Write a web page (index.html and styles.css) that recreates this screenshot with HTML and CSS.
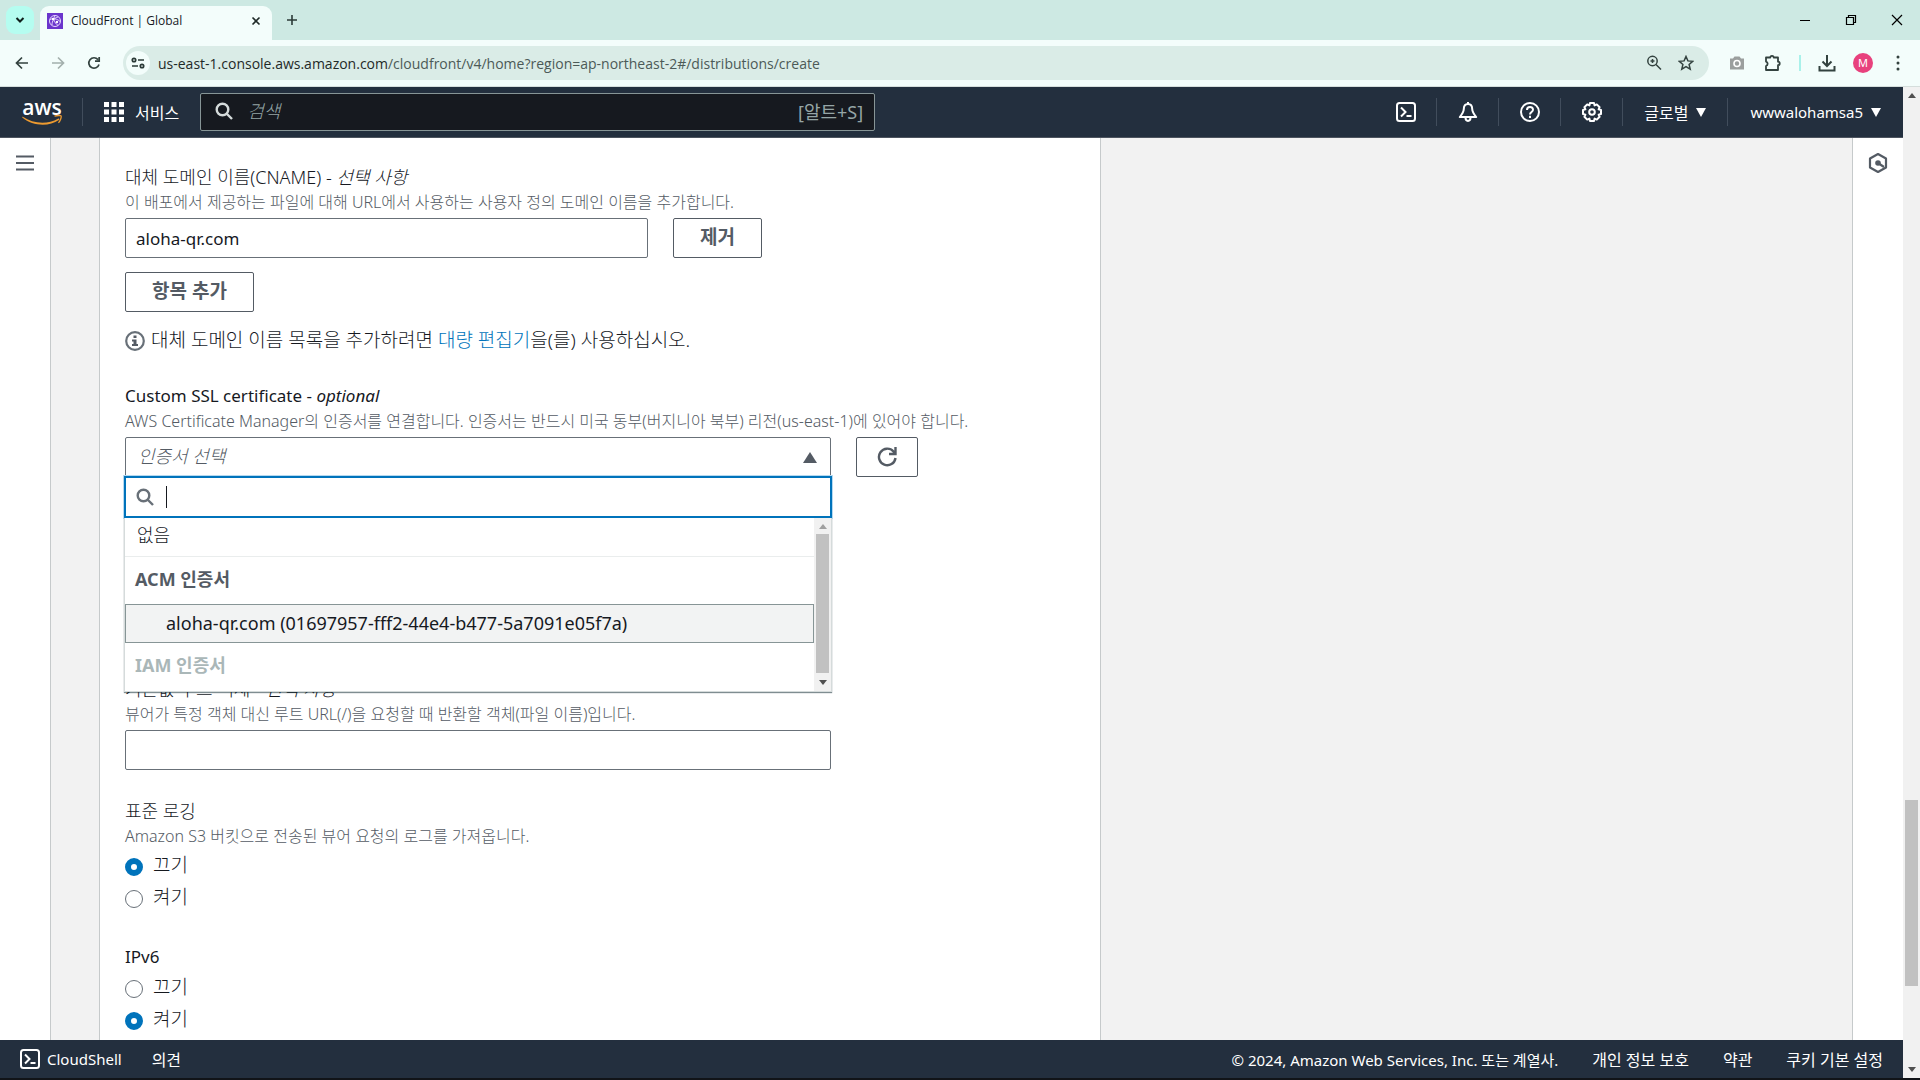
FILE: index.html
```html
<!DOCTYPE html>
<html lang="ko">
<head>
  <meta charset="utf-8">
  <title>CloudFront | Global</title>
  <link rel="stylesheet" href="styles.css">
</head>
<body>
  <!-- Browser window -->
  <div class="tab-strip">
    <button class="tab-search" aria-label="Search tabs">
      <svg width="12" height="12" viewBox="0 0 12 12"><path d="M2.500 4l3.500 3.500L9.500 4" fill="none" stroke="#10201c" stroke-width="2"/></svg>
    </button>
    <div class="tab">
      <svg class="favicon" width="16" height="16" viewBox="0 0 16 16">
        <rect width="16" height="16" fill="#6a35cc"/>
        <g fill="none" stroke="#e6d9ff" stroke-width="1">
          <circle cx="8" cy="8" r="5.500"/>
          <path d="M3 6.500c3-1.500 7-1 10 2M5 12c0-4 2-7 6-8M8 2.500c-2 3-1 7 3 10"/>
        </g>
        <circle cx="6" cy="6" r="1.200" fill="#fff"/><circle cx="10" cy="9" r="1.200" fill="#fff"/>
      </svg>
      <span class="tab-title">CloudFront | Global</span>
      <button class="icon-button" aria-label="Close tab">
        <svg width="10" height="10" viewBox="0 0 10 10"><path d="M1.500 1.500l7 7M8.500 1.500l-7 7" stroke="#1f2a28" stroke-width="1.600"/></svg>
      </button>
    </div>
    <button class="icon-button" aria-label="New tab">
      <svg width="12" height="12" viewBox="0 0 12 12"><path d="M6 1v10M1 6h10" stroke="#2b3a37" stroke-width="1.600"/></svg>
    </button>
    <div class="window-controls">
      <button class="icon-button" aria-label="Minimize"><svg width="12" height="12" viewBox="0 0 12 12"><path d="M1 6.500h10" stroke="#000"/></svg></button>
      <button class="icon-button" aria-label="Restore"><svg width="12" height="12" viewBox="0 0 12 12"><path d="M1.500 3.500h7v7h-7zM3.500 3.500v-2h7v7h-2" fill="none" stroke="#000" stroke-width="1.200"/></svg></button>
      <button class="icon-button" aria-label="Close"><svg width="12" height="12" viewBox="0 0 12 12"><path d="M1 1l10 10M11 1L1 11" stroke="#000" stroke-width="1.200"/></svg></button>
    </div>
  </div>

  <div class="toolbar">
    <button class="icon-button" aria-label="Back"><svg width="14" height="14" viewBox="0 0 14 14"><path d="M13 7H2M7 1.500L1.500 7 7 12.500" fill="none" stroke="#33423f" stroke-width="1.700"/></svg></button>
    <button class="icon-button" aria-label="Forward"><svg width="14" height="14" viewBox="0 0 14 14"><path d="M1 7h11M7 1.500L12.500 7 7 12.500" fill="none" stroke="#a3b0ad" stroke-width="1.700"/></svg></button>
    <button class="icon-button" aria-label="Reload"><svg width="14" height="14" viewBox="0 0 14 14"><path d="M12 8.500A5.200 5.200 0 1 1 11 3.600M12.200 1v4.200H8" fill="none" stroke="#33423f" stroke-width="1.700"/></svg></button>
    <div class="address-bar">
      <span class="site-info">
        <svg width="14" height="12" viewBox="0 0 14 12" fill="none" stroke="#2b3a37" stroke-width="1.700"><circle cx="3" cy="3" r="1.700"/><path d="M7 3h6M1 9h6"/><circle cx="11" cy="9" r="1.700"/></svg>
      </span>
      <span class="url">us-east-1.console.aws.amazon.com<span class="url-path">/cloudfront/v4/home?region=ap-northeast-2#/distributions/create</span></span>
      <svg width="16" height="16" viewBox="0 0 16 16" fill="none" stroke="#33423f" stroke-width="1.500"><circle cx="6.500" cy="6" r="4.700"/><path d="M10 9.500l5 5M4.500 6h4M6.500 4v4"/></svg>
      <svg width="16" height="16" viewBox="0 0 16 16" fill="none" stroke="#33423f" stroke-width="1.500"><path d="M8 1.500l1.900 4.400 4.800.4-3.600 3.200 1.100 4.700L8 11.700l-4.200 2.500 1.100-4.700L1.300 6.300l4.800-.4z"/></svg>
    </div>
    <div class="toolbar-icons">
      <svg width="20" height="16" viewBox="0 0 20 16"><path d="M3 3.500h3L7.500 1.500h5L14 3.500h3v11H3z" fill="#9b9f9e"/><circle cx="10" cy="8.500" r="3" fill="none" stroke="#fff" stroke-width="1.600"/></svg>
      <svg width="18" height="18" viewBox="0 0 18 18"><path d="M2 3.500h4.300a1.700 1.700 0 0 1 3.400 0H14v4.200a1.700 1.700 0 0 1 0 3.400V16H2v-4a2.300 2.300 0 0 0 0-4.400z" fill="none" stroke="#33423f" stroke-width="1.800" stroke-linejoin="round"/></svg>
      <span class="toolbar-divider"></span>
      <svg width="18" height="18" viewBox="0 0 18 18"><path d="M9 1v11M4.500 7.500L9 12l4.500-4.500M1.500 12v4.500h15V12" fill="none" stroke="#33423f" stroke-width="2"/></svg>
      <span class="avatar">M</span>
      <svg width="4" height="16" viewBox="0 0 4 16" fill="#33423f"><circle cx="2" cy="2" r="1.500"/><circle cx="2" cy="8" r="1.500"/><circle cx="2" cy="14" r="1.500"/></svg>
    </div>
  </div>

  <div class="viewport">
    <div class="console">
      <header class="aws-header">
        <a class="logo" href="#" aria-label="AWS">
          <span class="logo-text">aws</span>
          <svg width="40" height="11" viewBox="0 0 40 11"><path d="M.8 1.800C11 9 26 9.500 36 3.800c1-.6 1.900.4.900 1.200C27 12 11 11.500.3 2.600c-.5-.5 0-1.100.5-.8z" fill="#ec9a30"/><path d="M32.500 1.200c2.600-1 6.300-.9 6.600-.1.400 1-.8 5-2.700 6.600" fill="none" stroke="#ec9a30" stroke-width="1.300"/></svg>
        </a>
        <span class="header-divider"></span>
        <button class="services">
          <svg width="20" height="20" viewBox="0 0 20 20" fill="#fff"><path d="M0 0h5v5H0zM7.500 0h5v5h-5zM15 0h5v5h-5zM0 7.500h5v5H0zM7.500 7.500h5v5h-5zM15 7.500h5v5h-5zM0 15h5v5H0zM7.500 15h5v5h-5zM15 15h5v5h-5z"/></svg>
          서비스
        </button>
        <div class="header-search">
          <svg width="18" height="18" viewBox="0 0 18 18" fill="none" stroke="#d5dbdb" stroke-width="2.400"><circle cx="7.500" cy="7.500" r="5.800"/><path d="M11.500 11.500l5.500 5.500"/></svg>
          <input type="text" placeholder="검색" aria-label="검색">
          <span class="shortcut">[알트+S]</span>
        </div>
        <nav class="header-tools">
          <button class="header-tool" aria-label="CloudShell"><svg width="20" height="20" viewBox="0 0 20 20" fill="none" stroke="#fff" stroke-width="2"><rect x="1" y="1" width="18" height="18" rx="2.500"/><path d="M5 5.500l4.500 4.500L5 14.500M10.500 14h5"/></svg></button>
          <button class="header-tool" aria-label="알림"><svg width="20" height="20" viewBox="0 0 20 20" fill="none" stroke="#fff" stroke-width="2"><path d="M10 2C7 2 5.800 4.300 5.800 7c0 3-1.200 4.500-4 8h16.400c-2.800-3.500-4-5-4-8 0-2.700-1.200-5-4.200-5zM7.500 15.500c0 4.500 5 4.500 5 0M10 0v2" stroke-linejoin="round"/></svg></button>
          <button class="header-tool" aria-label="도움말"><svg width="20" height="20" viewBox="0 0 20 20" fill="none" stroke="#fff" stroke-width="2"><circle cx="10" cy="10" r="9"/><path d="M7 8c0-4 6-4 6-.3 0 2.300-3 2.300-3 4.800M10 13.800v2.200"/></svg></button>
          <button class="header-tool" aria-label="설정"><svg width="20" height="20" viewBox="0 0 20 20" fill="none" stroke="#fff" stroke-width="2"><path d="M8 1h4l.6 2.400 2.200-1 2.800 2.800-1 2.200L19 8v4l-2.400.6 1 2.200-2.800 2.800-2.200-1L12 19H8l-.6-2.400-2.200 1-2.800-2.800 1-2.200L1 12V8l2.400-.6-1-2.200 2.800-2.800 2.200 1z" stroke-linejoin="round"/><circle cx="10" cy="10" r="2.800"/></svg></button>
          <button class="header-menu region">글로벌 <svg width="10" height="9" viewBox="0 0 10 9"><path d="M0 0h10L5 9z" fill="#fff"/></svg></button>
          <button class="header-menu account">wwwalohamsa5 <svg width="10" height="9" viewBox="0 0 10 9"><path d="M0 0h10L5 9z" fill="#fff"/></svg></button>
        </nav>
      </header>

      <div class="content">
        <aside class="side-nav">
          <button class="icon-button" aria-label="메뉴 열기"><svg width="18" height="16" viewBox="0 0 18 16"><path d="M0 1.500h18M0 8h18M0 14.500h18" stroke="#545b64" stroke-width="2"/></svg></button>
        </aside>

        <main class="page">
          <form class="panel">
            <div class="field">
              <label class="field-label" for="cname">대체 도메인 이름(CNAME) - <i>선택 사항</i></label>
              <p class="hint">이 배포에서 제공하는 파일에 대해 URL에서 사용하는 사용자 정의 도메인 이름을 추가합니다.</p>
              <div class="control-row">
                <input class="text-input cname-input" id="cname" type="text" value="aloha-qr.com">
                <button class="button" type="button">제거</button>
              </div>
              <button class="button add-button" type="button">항목 추가</button>
              <p class="info">
                <svg width="20" height="20" viewBox="0 0 20 20"><circle cx="10" cy="10" r="8.800" fill="none" stroke="#687078" stroke-width="2.200"/><path d="M8.500 4.500h3v2.500h-3zM7 8.500h4.500V13H13v2H7v-2h1.500v-2.500H7z" fill="#545b64"/></svg>
                <span>대체 도메인 이름 목록을 추가하려면 <a href="#">대량 편집기</a>을(를) 사용하십시오.</span>
              </p>
            </div>

            <div class="field certificate-field">
              <label class="field-label" for="certificate" lang="en">Custom SSL certificate - <i>optional</i></label>
              <p class="hint">AWS Certificate Manager의 인증서를 연결합니다. 인증서는 반드시 미국 동부(버지니아 북부) 리전(us-east-1)에 있어야 합니다.</p>
              <div class="control-row">
                <div class="select-box">
                  <select class="select" id="certificate"><option>인증서 선택</option></select>
                  <div class="dropdown">
                    <div class="dropdown-search">
                      <svg width="18" height="18" viewBox="0 0 18 18" fill="none" stroke="#687078" stroke-width="2.400"><circle cx="7.500" cy="7.500" r="5.800"/><path d="M11.500 11.500l5.500 5.500"/></svg>
                      <span class="caret"></span>
                      <input type="text" aria-label="인증서 검색">
                    </div>
                    <div class="dropdown-body">
                      <ul class="options">
                        <li class="option none">없음</li>
                        <li class="group">ACM 인증서</li>
                        <li class="option selected">aloha-qr.com (01697957-fff2-44e4-b477-5a7091e05f7a)</li>
                        <li class="group disabled">IAM 인증서</li>
                      </ul>
                      <div class="scrollbar">
                        <svg width="8" height="5" viewBox="0 0 8 5"><path d="M0 5l4-5 4 5z" fill="#a0a0a0"/></svg>
                        <span class="list-thumb"></span>
                        <svg width="8" height="5" viewBox="0 0 8 5"><path d="M0 0l4 5 4-5z" fill="#505050"/></svg>
                      </div>
                    </div>
                  </div>
                </div>
                <button class="button refresh" type="button" aria-label="새로 고침">
                  <svg width="20" height="20" viewBox="0 0 20 20" fill="none" stroke="#545b64" stroke-width="2.400"><path d="M18.500 11A8.300 8.300 0 1 1 16.500 4.500L18 6.500M18.500 0v7H12"/></svg>
                </button>
              </div>
            </div>

            <div class="field">
              <label class="field-label" for="root-object">기본값 루트 객체 - <i>선택 사항</i></label>
              <p class="hint">뷰어가 특정 객체 대신 루트 URL(/)을 요청할 때 반환할 객체(파일 이름)입니다.</p>
              <div class="control-row">
                <input class="text-input" id="root-object" type="text">
              </div>
            </div>

            <div class="field" role="radiogroup" aria-labelledby="logging-label">
              <div class="field-label" id="logging-label">표준 로깅</div>
              <p class="hint">Amazon S3 버킷으로 전송된 뷰어 요청의 로그를 가져옵니다.</p>
              <div class="radios">
                <label class="radio"><input type="radio" name="logging" checked>끄기</label>
                <label class="radio"><input type="radio" name="logging">켜기</label>
              </div>
            </div>

            <div class="field" role="radiogroup" aria-labelledby="ipv6-label">
              <div class="field-label" id="ipv6-label" lang="en">IPv6</div>
              <div class="radios">
                <label class="radio"><input type="radio" name="ipv6">끄기</label>
                <label class="radio"><input type="radio" name="ipv6" checked>켜기</label>
              </div>
            </div>
          </form>
        </main>

        <aside class="help-nav">
          <button class="icon-button" aria-label="도움말 패널"><svg width="20" height="20" viewBox="0 0 20 20"><path d="M10 1l8 4.500v9L10 19l-8-4.500v-9z" fill="none" stroke="#545b64" stroke-width="2.200" stroke-linejoin="round"/><circle cx="10" cy="10" r="2.800" fill="#545b64"/><path d="M10 10l6 4" stroke="#545b64" stroke-width="2.200"/></svg></button>
        </aside>
      </div>

      <footer class="footer">
        <a class="cloudshell" href="#">
          <svg width="20" height="20" viewBox="0 0 20 20" fill="none" stroke="#fff" stroke-width="2"><rect x="1" y="1" width="18" height="18" rx="2.500"/><path d="M5 5.500l4.500 4.500L5 14.500M10.500 14h5"/></svg>
          CloudShell
        </a>
        <a class="footer-link" href="#">의견</a>
        <div class="legal">
          <span>© 2024, Amazon Web Services, Inc. 또는 계열사.</span>
          <a class="footer-link" href="#">개인 정보 보호</a>
          <a class="footer-link" href="#">약관</a>
          <a class="footer-link" href="#">쿠키 기본 설정</a>
        </div>
      </footer>
    </div>

    <div class="scrollbar page-scrollbar">
      <svg width="8" height="5" viewBox="0 0 8 5"><path d="M0 5l4-5 4 5z" fill="#505050"/></svg>
      <span class="page-thumb"></span>
      <svg width="8" height="5" viewBox="0 0 8 5"><path d="M0 0l4 5 4-5z" fill="#505050"/></svg>
    </div>
  </div>
</body>
</html>
```

FILE: styles.css
```css
* {
  box-sizing: border-box;
}

body {
  margin: 0;
  height: 100vh;
  display: flex;
  flex-direction: column;
  overflow: hidden;
  font-family: "Noto Sans", "Noto Sans CJK KR", sans-serif;
  font-size: 18px;
  color: #16191f;
  background: #111418;
}

svg {
  display: block;
  flex: none;
}

p, ul {
  margin: 0;
  padding: 0;
  list-style: none;
}

a {
  color: #0073bb;
  text-decoration: none;
}

button, input, select {
  font: inherit;
  color: inherit;
}

button {
  padding: 0;
  border: none;
  background: none;
}

.icon-button {
  display: flex;
  align-items: center;
  justify-content: center;
}

/* Tab strip */
.tab-strip {
  display: flex;
  align-items: center;
  flex: none;
  height: 40px;
  padding-left: 6px;
  background: #cde9e3;
}

.tab-search {
  display: flex;
  align-items: center;
  justify-content: center;
  width: 28px;
  height: 28px;
  margin-right: 6px;
  border-radius: 9px;
  background: #b5fdf0;
}

.tab {
  display: flex;
  align-items: center;
  gap: 8px;
  width: 232px;
  height: 34px;
  margin-right: 14px;
  padding: 0 11px 4px 7px;
  align-self: flex-end;
  border-radius: 9px 9px 0 0;
  background: #f3fdfb;
}

.tab-title {
  flex: 1;
  font-family: "Open Sans", sans-serif;
  font-size: 12px;
  line-height: 14px;
  white-space: nowrap;
}

.window-controls {
  display: flex;
  gap: 34px;
  margin-left: auto;
  margin-right: 17px;
}

/* Toolbar */
.toolbar {
  display: flex;
  align-items: center;
  flex: none;
  height: 47px;
  padding: 0 20px 0 15px;
  gap: 22px;
  background: #f3fdfb;
  border-bottom: 1px solid #d5dedc;
}

.address-bar {
  display: flex;
  align-items: center;
  flex: 1;
  gap: 16px;
  height: 34px;
  padding: 0 15px 0 3px;
  border-radius: 17px;
  background: #daece7;
}

.site-info {
  display: flex;
  align-items: center;
  justify-content: center;
  width: 24px;
  height: 24px;
  margin-right: -8px;
  border-radius: 50%;
  background: #f3fdfb;
}

.url {
  flex: 1;
  font-family: "Open Sans", sans-serif;
  font-size: 14px;
  color: #1f2a28;
}

.url-path {
  color: #4c5a57;
}

.toolbar-icons {
  display: flex;
  align-items: center;
  gap: 17px;
  margin-left: -4px;
}

.toolbar-divider {
  width: 2px;
  height: 16px;
  background: #a9f1ea;
}

.avatar {
  width: 20px;
  height: 20px;
  margin-right: 6px;
  border-radius: 50%;
  background: #e8417d;
  color: #fff;
  font-size: 11px;
  line-height: 20px;
  text-align: center;
}

/* Page area */
.viewport {
  display: flex;
  flex: 1;
  min-height: 0;
  margin-bottom: 2px;
}

.console {
  display: flex;
  flex-direction: column;
  flex: 1;
  min-width: 0;
}

.scrollbar {
  display: flex;
  flex-direction: column;
  align-items: center;
  flex: none;
  width: 17px;
  padding: 6px 0;
  background: #f1f1f1;
}

.page-thumb {
  width: 13px;
  height: 19%;
  margin-top: auto;
  margin-bottom: 81px;
  background: #c1c1c1;
}

/* AWS header */
.aws-header {
  display: flex;
  align-items: center;
  flex: none;
  height: 51px;
  padding-left: 22px;
  background: #232f3e;
  border-bottom: 1px solid #4d545f;
  color: #fff;
  font-size: 15px;
}

.logo {
  display: flex;
  flex-direction: column;
  align-items: center;
  color: #fff;
}

.logo-text {
  font-family: "Open Sans", sans-serif;
  font-size: 21px;
  font-weight: 600;
  line-height: 16px;
}

.header-divider {
  width: 1px;
  height: 28px;
  margin: 0 21px 0 20px;
  background: #414d5c;
}

.services {
  display: flex;
  align-items: center;
  gap: 11px;
  margin-right: 21px;
  font-size: 16px;
}

.header-search {
  display: flex;
  align-items: center;
  gap: 14px;
  flex: 1;
  max-width: 675px;
  height: 38px;
  padding: 0 11px 2px 14px;
  border: 1px solid #879596;
  border-radius: 2px;
  background: #16191f;
  font-size: 18px;
}

.header-search input {
  flex: 1;
  min-width: 0;
  padding: 0;
  border: none;
  background: none;
}

.header-search input::placeholder {
  color: #95a5a6;
  font-style: italic;
  font-weight: 300;
}

.shortcut {
  color: #95a5a6;
}

.header-tools {
  display: flex;
  align-items: center;
  margin-left: auto;
}

.header-tool {
  display: flex;
  justify-content: center;
  align-items: center;
  width: 62px;
  height: 28px;
  border-right: 1px solid #414d5c;
}

.header-menu {
  display: flex;
  align-items: center;
  gap: 8px;
  height: 28px;
  padding: 0 22px;
}

.region {
  padding: 0 21px;
  font-size: 16px;
}

.account {
  border-left: 1px solid #414d5c;
}

/* Content */
.content {
  display: flex;
  flex: 1;
  min-height: 0;
  overflow: hidden;
  background: #fff;
}

.side-nav {
  width: 51px;
  padding: 17px 16px;
  border-right: 1px solid #c6cacb;
}

.help-nav {
  width: 51px;
  padding: 15px;
  border-left: 1px solid #c6cacb;
}

.page {
  flex: 1;
  padding-left: 48px;
  background: #f2f2f2;
}

.panel {
  display: flex;
  flex-direction: column;
  gap: 28px;
  width: 58%;
  max-width: 1002px;
  padding: 26px 24px 60px 25px;
  border: solid #c6cacb;
  border-width: 0 1px;
  background: #fff;
}

.field-label {
  display: block;
  font-weight: 300;
  line-height: 26px;
}

.field-label:lang(en) {
  font-size: 17px;
  font-weight: 400;
}

.hint {
  color: #545b64;
  font-size: 16px;
  font-weight: 300;
  line-height: 24px;
  white-space: nowrap;
}

.control-row {
  display: flex;
  gap: 25px;
  margin-top: 4px;
}

.text-input {
  flex: 1;
  min-width: 0;
  max-width: 706px;
  height: 40px;
  padding: 0 10px;
  border: 1px solid #687078;
  border-radius: 2px;
  font-size: 17px;
  background: #fff;
}

.cname-input {
  max-width: 523px;
}

.button {
  height: 40px;
  padding: 0 26px 5px;
  border: 1px solid #545b64;
  border-radius: 2px;
  color: #545b64;
  font-size: 19px;
  font-weight: bold;
  background: #fff;
}

.add-button {
  margin-top: 14px;
}

.refresh {
  padding: 0 20px;
}

.info {
  display: flex;
  align-items: center;
  gap: 6px;
  margin-top: 14px;
  font-size: 19px;
  font-weight: 300;
  line-height: 29px;
}

/* Certificate select, shown open */
.certificate-field {
  margin-bottom: 171px;
}

.select-box {
  position: relative;
  flex: 1;
  max-width: 706px;
}

.select {
  appearance: none;
  display: block;
  width: 100%;
  height: 40px;
  padding: 0 12px 3px;
  border: 1px solid #687078;
  border-radius: 2px;
  color: #545b64;
  font-style: italic;
  font-weight: 300;
  background: #fff;
}

.select-box::after {
  content: "";
  position: absolute;
  top: 15px;
  right: 14px;
  border: solid transparent;
  border-width: 0 7px 11px;
  border-bottom-color: #545b64;
}

.dropdown {
  position: absolute;
  z-index: 1;
  top: 39px;
  left: -1px;
  right: -1px;
}

.dropdown-search {
  display: flex;
  align-items: center;
  height: 42px;
  padding: 0 10px;
  border: 2px solid #0073bb;
  box-shadow: 0 0 0 1px #b5d9f0;
  background: #fff;
}

.dropdown-search input {
  flex: 1;
  border: none;
  outline: none;
}

.caret {
  width: 1px;
  height: 22px;
  margin-left: 12px;
  background: #16191f;
}

.dropdown-body {
  display: flex;
  border: 1px solid #d5dbdb;
  border-top: none;
  background: #fff;
  box-shadow: 0 1px 1px rgba(0, 28, 36, 0.5);
}

.options {
  flex: 1;
}

.option {
  height: 39px;
  padding: 0 12px;
  line-height: 34px;
  border-bottom: 1px solid #eaeded;
}

.option.none {
  font-weight: 300;
}

.option.selected {
  padding-left: 40px;
  line-height: 36px;
  border: 1px solid #879596;
  background: #f2f3f3;
}

.group {
  height: 47px;
  padding: 0 10px;
  line-height: 44px;
  font-weight: bold;
  color: #545b64;
}

.group.disabled {
  height: 48px;
  color: #aab7b8;
}

.list-thumb {
  flex: 1;
  width: 13px;
  margin: 5px 0 7px;
  background: #c1c1c1;
}

/* Radios */
.radios {
  margin-top: 4px;
}

.radio {
  display: flex;
  align-items: flex-start;
  gap: 10px;
  height: 32px;
  font-size: 19px;
  font-weight: 300;
  line-height: 26px;
}

.radio input {
  appearance: none;
  width: 18px;
  height: 18px;
  margin: 6px 0 0;
  border: 1px solid #687078;
  border-radius: 50%;
  background: #fff;
}

.radio input:checked {
  border: 6px solid #0073bb;
}

/* Footer */
.footer {
  display: flex;
  align-items: center;
  flex: none;
  gap: 30px;
  height: 38px;
  padding: 0 20px;
  background: #232f3e;
  color: #fff;
  font-size: 15px;
}

.footer a {
  color: #fff;
}

.footer-link {
  font-size: 16px;
}

.cloudshell {
  display: flex;
  align-items: center;
  gap: 7px;
}

.legal {
  display: flex;
  align-items: center;
  gap: 34px;
  margin-left: auto;
}
```
